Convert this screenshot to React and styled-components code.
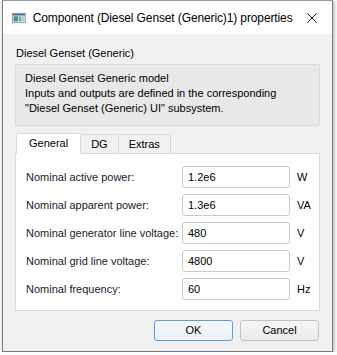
import React from "react";
import styled, { createGlobalStyle } from "styled-components";

const GlobalStyle = createGlobalStyle`
	html, body {
		margin: 0;
		padding: 0;
		background: #ffffff;
	}
	body {
		font-family: "Liberation Sans", Arial, sans-serif;
		font-size: 11px;
		color: #000;
	}
`;

const Window = styled.div`
	box-sizing: border-box;
	width: 331px;
	height: 352px;
	margin-left: 2px;
	border: 1px solid #7a7a7a;
	border-top-color: #9a9a9a;
	box-shadow: 1px 1px 4px rgba(0, 0, 0, 0.35);
	background: #f0f0f0;
	display: flex;
	flex-direction: column;
`;

const TitleBar = styled.div`
	height: 33px;
	background: #ffffff;
	display: flex;
	align-items: center;
	padding-left: 9px;
	flex-shrink: 0;
`;

const AppIcon = styled.svg`
	width: 16px;
	height: 12px;
	margin-right: 7px;
	margin-top: 1px;
`;

const Title = styled.div`
	font-size: 12px;
	letter-spacing: -0.12px;
	color: #000;
	flex: 1;
	white-space: nowrap;
`;

const CloseButton = styled.div`
	width: 46px;
	height: 33px;
	display: flex;
	align-items: center;
	justify-content: center;
`;

const Body = styled.div`
	padding: 12px 12px 0 12px;
	display: flex;
	flex-direction: column;
`;

const Caption = styled.div`
	height: 14px;
	line-height: 14px;
	padding-left: 1px;
`;

const DescBox = styled.div`
	margin-top: 4px;
	border: 1px solid #dadada;
	border-radius: 2px;
	background: #e8e8e8;
	height: 62px;
	box-sizing: border-box;
	padding: 6px 9px;
	line-height: 15px;
`;

const TabBar = styled.div`
	display: flex;
	align-items: flex-end;
	height: 21px;
	margin-top: 6px;
	padding-left: 1px;
`;

const Tab = styled.div`
	box-sizing: border-box;
	height: ${(p) => (p.active ? "21px" : "19px")};
	padding: 0 ${(p) => (p.active ? "12px" : "10px")};
	line-height: ${(p) => (p.active ? "19px" : "18px")};
	border: 1px solid #d9d9d9;
	border-bottom: none;
	border-left: ${(p) => (p.first ? "1px solid #d9d9d9" : "none")};
	border-radius: 2px 2px 0 0;
	background: ${(p) => (p.active ? "#ffffff" : "#f0f0f0")};
	position: relative;
	z-index: ${(p) => (p.active ? 1 : 0)};
	margin-bottom: ${(p) => (p.active ? "-1px" : "0")};
`;

const Pane = styled.div`
	box-sizing: border-box;
	height: 158px;
	border: 1px solid #d9d9d9;
	background: #ffffff;
	padding: 12px 0 0 10px;
	display: grid;
	grid-template-columns: 156px 108px auto;
	grid-auto-rows: 22px;
	row-gap: 6px;
	align-items: center;
`;

const Label = styled.div`
	color: #1a1a2a;
`;

const Field = styled.div`
	box-sizing: border-box;
	height: 22px;
	border: 1px solid #c9c9c9;
	border-radius: 3px;
	padding-left: 5px;
	line-height: 20px;
	background: #fff;
`;

const Unit = styled.div`
	padding-left: 7px;
`;

const ButtonRow = styled.div`
	display: flex;
	justify-content: flex-end;
	gap: 7px;
	margin-top: 9px;
	padding-right: 1px;
`;

const Button = styled.div`
	box-sizing: border-box;
	width: 79px;
	height: 21px;
	line-height: 19px;
	text-align: center;
	border-radius: 3px;
	border: 1px solid ${(p) => (p.primary ? "#56a0e0" : "#c2c2c2")};
	background: ${(p) =>
		p.primary
			? "linear-gradient(#f6f9fc, #eaf0f6)"
			: "linear-gradient(#f6f6f6, #e9e9e9)"};
`;

const params = [
	{ label: "Nominal active power:", value: "1.2e6", unit: "W" },
	{ label: "Nominal apparent power:", value: "1.3e6", unit: "VA" },
	{ label: "Nominal generator line voltage:", value: "480", unit: "V" },
	{ label: "Nominal grid line voltage:", value: "4800", unit: "V" },
	{ label: "Nominal frequency:", value: "60", unit: "Hz" },
];

export default function App() {
	return (
		<>
			<GlobalStyle />
			<Window>
				<TitleBar>
					<AppIcon viewBox="0 0 16 12">
						<rect x="0.5" y="0.5" width="15" height="11" fill="#dfe6ea" stroke="#8a9aa6" />
						<rect x="1" y="1" width="14" height="2" fill="#3c6e8f" />
						<rect x="2" y="4" width="5" height="6" fill="#4a8a9c" />
						<rect x="8" y="4" width="3" height="6" fill="#6fb58a" />
						<rect x="12" y="4" width="2" height="6" fill="#a9d0dc" />
					</AppIcon>
					<Title>Component (Diesel Genset (Generic)1) properties</Title>
					<CloseButton>
						<svg width="10" height="10" viewBox="0 0 10 10">
							<path d="M0.5 0.5 L9.5 9.5 M9.5 0.5 L0.5 9.5" stroke="#111" strokeWidth="1" />
						</svg>
					</CloseButton>
				</TitleBar>
				<Body>
					<Caption>Diesel Genset (Generic)</Caption>
					<DescBox>
						Diesel Genset Generic model
						<br />
						Inputs and outputs are defined in the corresponding
						<br />
						"Diesel Genset (Generic) UI" subsystem.
					</DescBox>
					<TabBar>
						<Tab active first>General</Tab>
						<Tab>DG</Tab>
						<Tab>Extras</Tab>
					</TabBar>
					<Pane>
						{params.map((el) => (
							<React.Fragment key={el.label}>
								<Label>{el.label}</Label>
								<Field>{el.value}</Field>
								<Unit>{el.unit}</Unit>
							</React.Fragment>
						))}
					</Pane>
					<ButtonRow>
						<Button primary>OK</Button>
						<Button>Cancel</Button>
					</ButtonRow>
				</Body>
			</Window>
		</>
	);
}
